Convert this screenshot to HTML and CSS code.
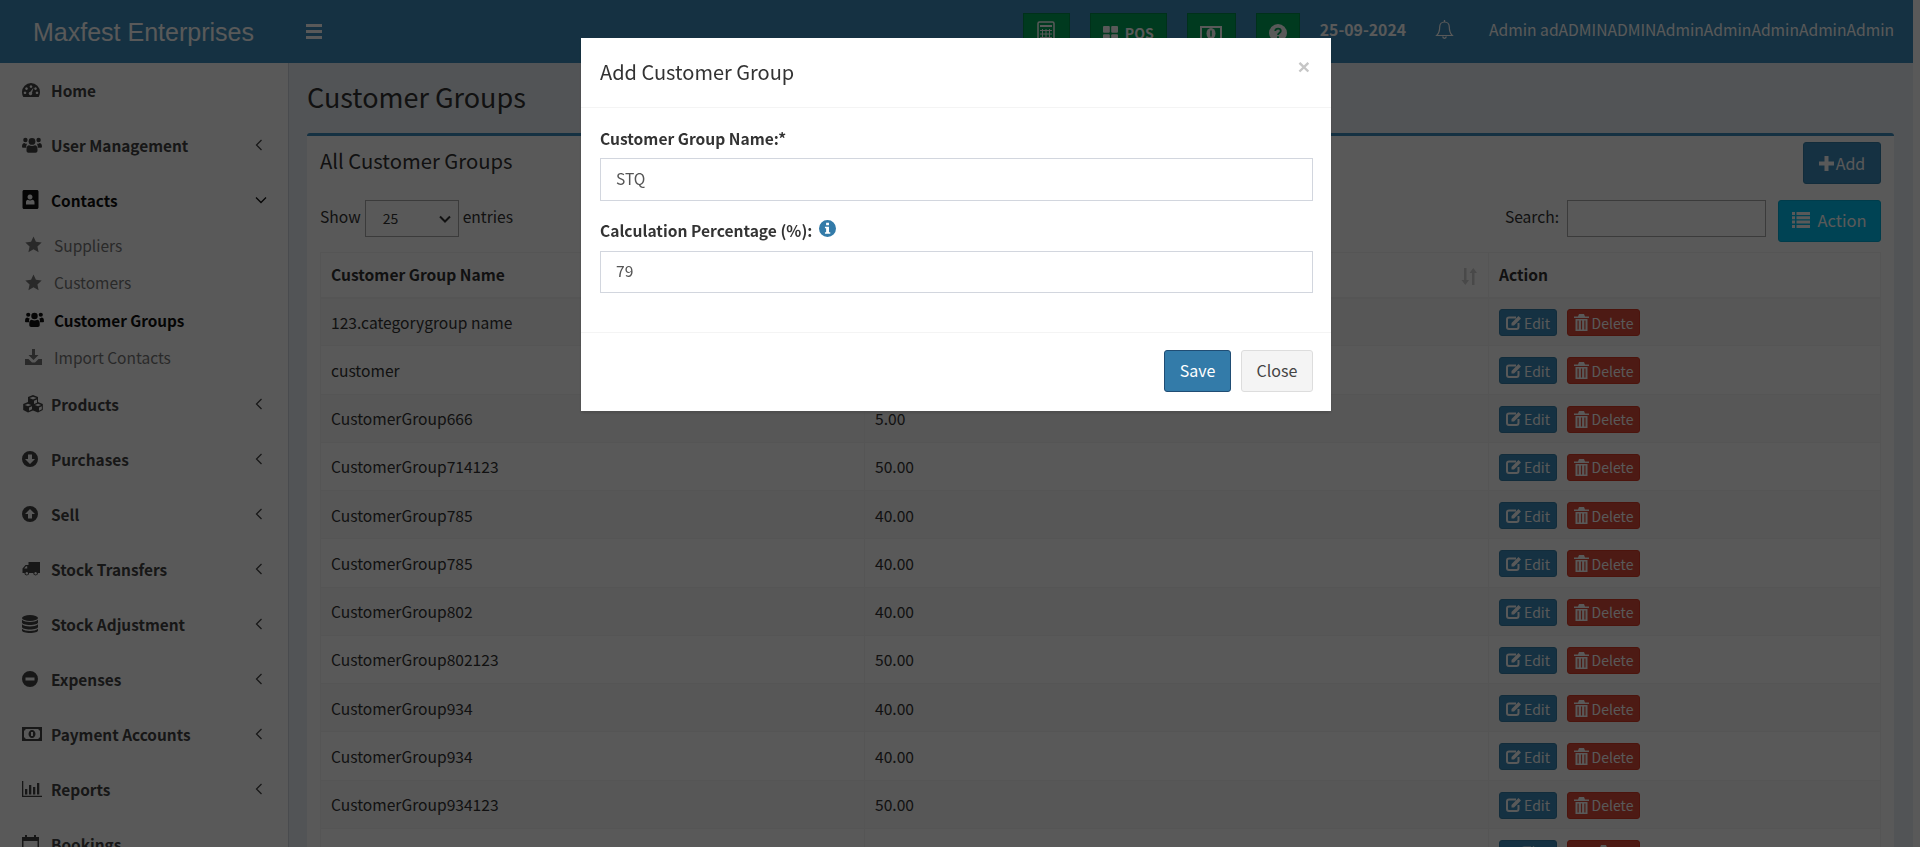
FILE: index.html
```html
<!DOCTYPE html>
<html lang="en">
<head>
    <meta charset="UTF-8">
    <title>Customer Groups</title>
    <link rel="stylesheet" href="styles.css">
</head>
<body>
    <svg class="sprite" width="0" height="0">
        <symbol id="i-users" viewBox="0 0 20 16"><circle cx="3.4" cy="3" r="2.2"/><circle cx="16.6" cy="3" r="2.2"/><circle cx="10" cy="4.4" r="3.4"/><path d="M0 10c0-3 1-4 2.5-4 .8.7 1.6 1 2.6.8-.5.8-.8 1.700-.8 3.200v.8H1c-.6 0-1-.3-1-.8zM20 10c0-3-1-4-2.500-4-.8.7-1.600 1-2.600.8.5.8.8 1.700.8 3.200v.8H19c.6 0 1-.3 1-.8zM7 8.200c1.700 1 4.300 1 6 0 1.300 0 2.500 1.300 2.500 4v1.600c0 1.200-.8 2-2 2H6.500c-1.200 0-2-.8-2-2v-1.600c0-2.700 1.200-4 2.500-4z"/></symbol>
        <symbol id="i-star" viewBox="0 0 16 16"><path d="M8 .5l2.300 5 5.400.6-4 3.700 1.100 5.400L8 12.500l-4.800 2.700 1.100-5.400-4-3.700 5.400-.6z"/></symbol>
        <symbol id="i-left" viewBox="0 0 8 12"><path d="M6.500 1L1.500 6l5 5" fill="none" stroke="currentColor" stroke-width="1.300"/></symbol>
    </svg>

    <header class="topbar">
        <div class="brand">Maxfest Enterprises</div>
        <div class="burger"><span></span><span></span><span></span></div>
        <div class="topbar-right">
            <a class="tool tool-calc">
                <svg width="18" height="24" viewBox="0 0 18 24"><rect x="1" y="1" width="16" height="22" rx="1.500" fill="none" stroke="currentColor" stroke-width="1.500"/><path d="M3 5h12" stroke="currentColor" stroke-width="2"/><path d="M3 9.500h12M3 13h12M3 16.500h12M3 20h12M5.500 8v13M9 8v13M12.500 8v13" stroke="currentColor"/></svg>
            </a>
            <a class="tool tool-pos">
                <svg width="15" height="15" viewBox="0 0 15 15" fill="currentColor"><rect width="6.800" height="6.800" rx="1"/><rect x="8.200" width="6.800" height="6.800" rx="1"/><rect y="8.200" width="6.800" height="6.800" rx="1"/><rect x="8.200" y="8.200" width="6.800" height="6.800" rx="1"/></svg>
                <b>POS</b>
            </a>
            <a class="tool tool-cash">
                <svg width="22" height="15" viewBox="0 0 22 15"><rect x="1" y="1" width="20" height="13" fill="none" stroke="currentColor" stroke-width="2"/><ellipse cx="11" cy="7.500" rx="4.500" ry="5.500" fill="currentColor"/><path d="M11 4.500v6" stroke="#00a65a" stroke-width="1.500"/></svg>
            </a>
            <a class="tool tool-help">
                <svg width="18" height="18" viewBox="0 0 18 18"><circle cx="9" cy="9" r="9" fill="currentColor"/><path d="M6.200 7c.2-1.500 1.300-2.300 2.800-2.300S11.800 5.600 11.800 7c0 2-2.800 2-2.800 4" fill="none" stroke="#00a65a" stroke-width="1.800"/><rect x="8" y="12.300" width="2" height="2" fill="#00a65a"/></svg>
            </a>
            <span class="today">25-09-2024</span>
            <svg class="bell" width="19" height="20" viewBox="0 0 19 20"><path d="M9.500 2c-3 0-4.800 2.300-4.800 5 0 4.500-1 6.500-3 8.500h15.600c-2-2-3-4-3-8.500 0-2.700-1.800-5-4.800-5z" fill="none" stroke="currentColor" stroke-width="1.200"/><path d="M9.500 0v2M7.800 16.500c0 2.400 3.400 2.400 3.400 0" fill="none" stroke="currentColor" stroke-width="1.300"/></svg>
            <span class="username">Admin adADMINADMINAdminAdminAdminAdminAdmin</span>
        </div>
    </header>

    <div class="layout">
        <aside class="sidebar">
            <a class="nav-item">
                <svg class="nav-icon" width="18" height="14" viewBox="0 0 18 14"><path fill-rule="evenodd" d="M9 0a9 9 0 0 1 9 9c0 1.800-.5 3.400-1.300 5H1.300A10 10 0 0 1 0 9a9 9 0 0 1 9-9zM4.500 4.300a1.300 1.300 0 1 0 .01 0zM9 2.300a1.300 1.300 0 1 0 .01 0zM13.500 4.300a1.300 1.300 0 1 0 .01 0zM3 8.500a1.300 1.300 0 1 0 .01 0zM15 8.500a1.300 1.300 0 1 0 .01 0zM11.600 4.500L8.400 8.800a1.700 1.700 0 1 0 1.600 1z"/></svg>
                <span>Home</span>
            </a>
            <a class="nav-item">
                <svg class="nav-icon" width="20" height="18"><use href="#i-users"/></svg>
                <span>User Management</span>
                <svg class="chevron" width="8" height="12"><use href="#i-left"/></svg>
            </a>
            <a class="nav-item active">
                <svg class="nav-icon" width="17" height="19" viewBox="0 0 17 19"><path fill-rule="evenodd" d="M2 0h13c.8 0 1.500.7 1.500 1.500v16c0 .8-.7 1.500-1.500 1.500H2c-.8 0-1.500-.7-1.500-1.500v-16C.5.700 1.200 0 2 0zM8 4.500a2.500 2.500 0 1 0 .01 0zM4 14.500h8.500v-2c0-1.800-1-2.700-2.300-2.700-1.200.8-3.200.8-4.300 0C4.800 9.800 4 10.700 4 12.500z"/></svg>
                <span>Contacts</span>
                <svg class="chevron chevron-down" width="12" height="8" viewBox="0 0 12 8"><path d="M1 1.500l5 5 5-5" fill="none" stroke="currentColor" stroke-width="1.300"/></svg>
            </a>
            <div class="subnav">
                <a class="sub-item"><svg width="17" height="17"><use href="#i-star"/></svg><span>Suppliers</span></a>
                <a class="sub-item"><svg width="17" height="17"><use href="#i-star"/></svg><span>Customers</span></a>
                <a class="sub-item current"><svg width="19" height="17"><use href="#i-users"/></svg><span>Customer Groups</span></a>
                <a class="sub-item"><svg width="17" height="16" viewBox="0 0 17 16"><path d="M7 0h3v6h3.500L8.500 11 3.500 6H7zM0 10h3.500L7 13.500h3L13.500 10H17v6H0z"/></svg><span>Import Contacts</span></a>
            </div>
            <a class="nav-item">
                <svg class="nav-icon" width="22" height="18" viewBox="0 0 22 18"><path fill-rule="evenodd" d="M11 0l5 2v5l4.800 2v6L16 17.500 11 15.500 6 17.500 1.200 15V9L6 7V2zM7.500 3l3.500 1.400L14.500 3 11 1.700zM12 5.800V9l3-1.200V4.600zM2.800 10l3.200 1.300L9.200 10 6 8.700zM12.800 10l3.200 1.300 3.200-1.300L16 8.700zM7 12.500v3.200l3-1.400v-3zM17 12.500v3.200l2.800-1.400v-3z"/></svg>
                <span>Products</span>
                <svg class="chevron" width="8" height="12"><use href="#i-left"/></svg>
            </a>
            <a class="nav-item">
                <svg class="nav-icon" width="16" height="16" viewBox="0 0 16 16"><path fill-rule="evenodd" d="M8 0a8 8 0 1 1 0 16A8 8 0 0 1 8 0zM6 3.500V8H3l5 5 5-5h-3V3.500z"/></svg>
                <span>Purchases</span>
                <svg class="chevron" width="8" height="12"><use href="#i-left"/></svg>
            </a>
            <a class="nav-item">
                <svg class="nav-icon" width="16" height="16" viewBox="0 0 16 16"><path fill-rule="evenodd" d="M8 0a8 8 0 1 1 0 16A8 8 0 0 1 8 0zM6 12.500V8H3l5-5 5 5h-3v4.500z"/></svg>
                <span>Sell</span>
                <svg class="chevron" width="8" height="12"><use href="#i-left"/></svg>
            </a>
            <a class="nav-item">
                <svg class="nav-icon" width="18" height="14" viewBox="0 0 18 14"><path fill-rule="evenodd" d="M6.500 0H18v11h-2a2.400 2.400 0 0 1-4.800 0H7.200a2.400 2.400 0 0 1-4.800 0H.5V6.500L3.500 3h3zM2.200 6.500h3V4.200H4zM4.800 10a1.300 1.300 0 1 0 .01 0zM13.600 10a1.300 1.300 0 1 0 .01 0z"/></svg>
                <span>Stock Transfers</span>
                <svg class="chevron" width="8" height="12"><use href="#i-left"/></svg>
            </a>
            <a class="nav-item">
                <svg class="nav-icon" width="16" height="18" viewBox="0 0 16 18"><ellipse cx="8" cy="3" rx="8" ry="3"/><path d="M0 4.800C1.500 6.500 5 7 8 7s6.500-.5 8-2.200v2.700C16 9 12.500 10 8 10S0 9 0 7.500zM0 9.300C1.500 11 5 11.500 8 11.500s6.500-.5 8-2.200V12c0 1.500-3.500 2.500-8 2.500S0 13.500 0 12zM0 13.800c1.500 1.700 5 2.200 8 2.200s6.500-.5 8-2.200v1.700c0 1.500-3.500 2.500-8 2.500s-8-1-8-2.500z"/></svg>
                <span>Stock Adjustment</span>
                <svg class="chevron" width="8" height="12"><use href="#i-left"/></svg>
            </a>
            <a class="nav-item">
                <svg class="nav-icon" width="16" height="16" viewBox="0 0 16 16"><path fill-rule="evenodd" d="M8 0a8 8 0 1 1 0 16A8 8 0 0 1 8 0zM3.500 6.500v3h9v-3z"/></svg>
                <span>Expenses</span>
                <svg class="chevron" width="8" height="12"><use href="#i-left"/></svg>
            </a>
            <a class="nav-item">
                <svg class="nav-icon" width="20" height="14" viewBox="0 0 20 14"><path fill-rule="evenodd" d="M0 0h20v14H0zM2 3.500v7c1 0 1.500.5 1.500 1.500h13c0-1 .5-1.500 1.500-1.500v-7c-1 0-1.500-.5-1.500-1.500h-13C3.500 3 3 3.500 2 3.500zM10 3c2 0 3.500 1.800 3.500 4S12 11 10 11 6.500 9.200 6.500 7 8 3 10 3zM9 5v4h2V5z"/></svg>
                <span>Payment Accounts</span>
                <svg class="chevron" width="8" height="12"><use href="#i-left"/></svg>
            </a>
            <a class="nav-item">
                <svg class="nav-icon" width="20" height="16" viewBox="0 0 20 16"><path d="M0 0h1.300v14.700H20V16H0zM3 8h2.300v5.500H3zM7 4h2.300v9.500H7zM11 6h2.300v7.500H11zM15 2h2.300v11.500H15z"/></svg>
                <span>Reports</span>
                <svg class="chevron" width="8" height="12"><use href="#i-left"/></svg>
            </a>
            <a class="nav-item">
                <svg class="nav-icon" width="17" height="18" viewBox="0 0 17 18"><path fill-rule="evenodd" d="M3 0h2v2h7V0h2v2h3v16H0V2h3zM1.500 6v10.500h14V6z"/></svg>
                <span>Bookings</span>
            </a>
        </aside>

        <main class="content">
            <h1 class="page-title">Customer Groups</h1>
            <section class="box">
                <div class="box-header">
                    <h2>All Customer Groups</h2>
                    <button class="btn btn-add">
                        <svg width="15" height="15" viewBox="0 0 15 15" fill="currentColor"><path d="M5.500 0h4v5.500H15v4H9.500V15h-4V9.500H0v-4h5.500z"/></svg>Add
                    </button>
                </div>
                <div class="table-tools">
                    <label class="length">Show <span class="fake-select">25<svg width="12" height="8" viewBox="0 0 12 8"><path d="M1 1.500l5 5 5-5" fill="none" stroke="currentColor" stroke-width="2"/></svg></span> entries</label>
                    <label class="search">Search: <span class="fake-input"></span></label>
                    <button class="btn btn-action">
                        <svg width="18" height="16" viewBox="0 0 18 16" fill="currentColor"><path d="M0 0h3v3H0zM4.500 0H18v3H4.500zM0 4.300h3v3H0zM4.500 4.300H18v3H4.500zM0 8.600h3v3H0zM4.500 8.600H18v3H4.500zM0 12.900h3v3H0zM4.500 12.900H18v3H4.500z"/></svg>Action
                    </button>
                </div>
                <table class="data-table" id="groups">
                    <thead>
                        <tr>
                            <th class="col-name">Customer Group Name</th>
                            <th class="col-pct">Calculation Percentage (%)<svg class="sort" width="17" height="18" viewBox="0 0 17 18"><path d="M3 1h2.500v12H8l-3.700 5L.5 13H3zM11 18V6H8.500L12.300 1 16 6h-2.500v12z"/></svg></th>
                            <th class="col-action">Action</th>
                        </tr>
                    </thead>
                    <tbody id="rows"></tbody>
                </table>
            </section>
        </main>
    </div>

    <div class="backdrop"></div>
    <div class="modal">
        <div class="modal-content">
            <div class="modal-header">
                <h4>Add Customer Group</h4>
                <span class="modal-close">×</span>
            </div>
            <div class="modal-body">
                <div class="form-group">
                    <label>Customer Group Name:*</label>
                    <input class="form-control" type="text" value="STQ">
                </div>
                <div class="form-group">
                    <label>Calculation Percentage (%):
                        <svg class="info" width="17" height="17" viewBox="0 0 16 16"><path fill-rule="evenodd" d="M8 0a8 8 0 1 1 0 16A8 8 0 0 1 8 0zM6.700 2.600v2.300h2.700V2.600zM5.600 6.300v1.500h1.100v3.700H5.600V13h5v-1.500H9.400V6.300z"/></svg>
                    </label>
                    <input class="form-control" type="text" value="79">
                </div>
            </div>
            <div class="modal-footer">
                <button class="btn btn-save">Save</button>
                <button class="btn btn-close">Close</button>
            </div>
        </div>
    </div>

    <script>
        var groups = [
            ['123.categorygroup name', ''],
            ['customer', ''],
            ['CustomerGroup666', '5.00'],
            ['CustomerGroup714123', '50.00'],
            ['CustomerGroup785', '40.00'],
            ['CustomerGroup785', '40.00'],
            ['CustomerGroup802', '40.00'],
            ['CustomerGroup802123', '50.00'],
            ['CustomerGroup934', '40.00'],
            ['CustomerGroup934', '40.00'],
            ['CustomerGroup934123', '50.00']
        ];
        var editIcon = '<svg width="15" height="14" viewBox="0 0 15 14"><path d="M10 1.500H3C1.700 1.500 1 2.300 1 3.500v7.500c0 1.200.7 2 2 2h7.500c1.200 0 2-.8 2-2V7" fill="none" stroke="currentColor" stroke-width="2"/><path fill="currentColor" d="M12.500 0L15 2.500 8 9.500H5.500V7z"/></svg>';
        var trashIcon = '<svg width="15" height="17" viewBox="0 0 15 17"><path fill="currentColor" fill-rule="evenodd" d="M5 0h5l1 2.500h4V4H0V2.500h4zM1.500 5h12v12h-12zM3.500 6.500v9h1.200v-9zM6.900 6.500v9h1.200v-9zM10.300 6.500v9h1.200v-9z"/></svg>';
        var html = '';
        groups.forEach(function (g) {
            html += '<tr><td>' + g[0] + '</td><td>' + g[1] + '</td><td>' +
                '<button class="btn btn-xs btn-edit">' + editIcon + 'Edit</button>' +
                '<button class="btn btn-xs btn-delete">' + trashIcon + 'Delete</button>' +
                '</td></tr>';
        });
        // last row only shows the top of its buttons above the fold
        html += '<tr><td></td><td></td><td>' +
            '<button class="btn btn-xs btn-edit">' + editIcon + '</button>' +
            '<button class="btn btn-xs btn-delete">' + trashIcon + '</button>' +
            '</td></tr>';
        document.getElementById('rows').innerHTML = html;
    </script>
</body>
</html>
```

FILE: styles.css
```css
* {
    margin: 0;
    padding: 0;
    box-sizing: border-box;
}

html, body {
    height: 847px;
    overflow: hidden;
}

body {
    font-family: "Noto Sans CJK SC", "Noto Sans", sans-serif;
    font-size: 15.6px;
    line-height: 22px;
    color: #333;
    background: #fff;
    padding-right: 7px;
}

.sprite {
    position: absolute;
}

svg {
    fill: currentColor;
    flex: none;
}

.btn {
    font-family: inherit;
    border: 1px solid transparent;
    border-radius: 3px;
    cursor: pointer;
}

/* top bar */
.topbar {
    height: 63px;
    background: #3c8dbc;
    color: #fff;
    display: flex;
    align-items: center;
}

.brand {
    width: 288px;
    padding-left: 33px;
    font-family: "Liberation Sans", Arial, sans-serif;
    font-size: 25px;
}

.burger {
    margin-left: 18px;
    width: 16px;
    display: flex;
    flex-direction: column;
    gap: 3px;
}

.burger span {
    height: 3px;
    background: #fff;
}

.topbar-right {
    margin-left: auto;
    padding-right: 19px;
    display: flex;
    align-items: center;
}

.tool {
    height: 40px;
    margin-top: 3px;
    margin-right: 20px;
    background: #00a65a;
    border: 1px solid #008d4c;
    display: flex;
    align-items: center;
    justify-content: center;
    gap: 7px;
    font-size: 14px;
}

.tool-calc { width: 47px; }
.tool-pos { width: 77px; }
.tool-cash { width: 49px; }
.tool-help { width: 44px; }

.today {
    font-weight: 700;
    font-size: 15.8px;
    margin-bottom: 3px;
}

.bell {
    margin: 0 35px 3px 29px;
}

.username {
    font-size: 15.65px;
    margin-bottom: 3px;
}

/* sidebar */
.layout {
    display: flex;
    height: 784px;
    background: #ecf0f5;
}

.sidebar {
    width: 289px;
    flex: none;
    background: #fff;
    border-right: 1px solid #d2d6de;
    overflow: hidden;
    padding-top: 0;
}

.nav-item {
    height: 55px;
    padding-left: 22px;
    padding-right: 25px;
    display: grid;
    grid-template-columns: 29px 1fr auto;
    align-items: center;
    font-size: 15.4px;
    font-weight: 600;
    color: #444;
    position: relative;
    top: -1px;
}

.nav-item.active {
    color: #111;
}

.chevron-down {
    margin-right: -4px;
}

.subnav {
    margin-top: -1px;
    position: relative;
    top: -1px;
}

.sub-item {
    height: 37.500px;
    padding-left: 25px;
    display: grid;
    grid-template-columns: 29px 1fr;
    align-items: center;
    font-size: 15.5px;
    color: #777;
}

.sub-item.current {
    color: #111;
    font-weight: 600;
    font-size: 15.3px;
}

/* content */
.content {
    flex: 1;
    min-width: 0;
    padding: 0 19px 0 18px;
}

.page-title {
    font-size: 27px;
    font-weight: 400;
    line-height: 40px;
    margin-top: 14px;
    margin-bottom: 16px;
}

.box {
    background: #fff;
    border-top: 3px solid #3c8dbc;
    border-radius: 3px;
    padding: 0 13px;
}

.box-header {
    height: 64px;
    display: flex;
    justify-content: space-between;
    padding-top: 6px;
}

.box-header h2 {
    font-size: 20.250px;
    font-weight: 400;
    line-height: 26px;
    margin-top: 6px;
}

.btn-add {
    width: 78px;
    height: 42px;
    background: #3c8dbc;
    border-color: #367fa9;
    color: #fff;
    font-size: 16px;
    display: flex;
    align-items: center;
    justify-content: center;
    gap: 2px;
}

.table-tools {
    display: flex;
    align-items: flex-start;
    height: 52px;
}

.length, .search {
    display: flex;
    align-items: flex-start;
    line-height: 33px;
    gap: 4px;
}

.fake-select {
    width: 94px;
    height: 37px;
    border: 1px solid #aaa;
    padding: 0 7px 0 17px;
    display: flex;
    align-items: center;
    justify-content: space-between;
    font-size: 14px;
}

.search {
    margin-left: auto;
    gap: 8px;
}

.fake-input {
    width: 199px;
    height: 37px;
    border: 1px solid #aaa;
}

.btn-action {
    margin-left: 12px;
    width: 103px;
    height: 42px;
    padding-bottom: 3px;
    background: #00c0ef;
    border-color: #00acd6;
    color: #fff;
    font-size: 16.500px;
    display: flex;
    align-items: center;
    justify-content: center;
    gap: 7px;
}

.data-table {
    width: 100%;
    border-collapse: collapse;
    table-layout: fixed;
}

.data-table th, .data-table td {
    text-align: left;
    padding: 0 10px;
    border: 1px solid #f4f4f4;
}

.data-table th {
    height: 45px;
    padding-bottom: 2px;
    font-weight: 700;
    position: relative;
    border-bottom-width: 2px;
}

.data-table td {
    height: 48.250px;
}

.data-table tbody tr:nth-child(odd) {
    background: #f9f9f9;
}

.col-name { width: 544px; }
.col-pct { width: 624px; }

.sort {
    position: absolute;
    right: 10px;
    top: 14px;
    color: #d0d0d0;
}

.btn-xs {
    height: 27px;
    margin-top: 2px;
    font-size: 14px;
    color: #fff;
    display: inline-flex;
    align-items: center;
    justify-content: center;
    gap: 3px;
    vertical-align: middle;
}

.btn-edit {
    width: 58px;
    background: #3c8dbc;
    border-color: #367fa9;
}

.btn-delete {
    width: 73px;
    margin-left: 10px;
    background: #dd4b39;
    border-color: #d73925;
}

/* modal */
.backdrop {
    position: fixed;
    inset: 0;
    background: rgba(0, 0, 0, 0.65);
}

.modal {
    position: fixed;
    inset: 0;
    padding-top: 38px;
}

.modal-content {
    width: 750px;
    height: 373px;
    margin-left: 581px;
    background: #fff;
    box-shadow: 0 2px 3px rgba(0, 0, 0, 0.125);
}

.modal-header {
    height: 70px;
    padding: 0 20px 2px 19px;
    border-bottom: 1px solid #f4f4f4;
    display: flex;
    align-items: center;
    justify-content: space-between;
}

.modal-header h4 {
    font-size: 20px;
    font-weight: 400;
}

.modal-close {
    font-family: "Liberation Sans", Arial, sans-serif;
    font-size: 21px;
    font-weight: 700;
    color: #c6c6c6;
    margin-top: -10px;
    margin-right: 1px;
}

.modal-body {
    height: 224px;
    padding: 19px 18px 0 19px;
}

.form-group {
    margin-bottom: 18px;
}

.form-group label {
    display: flex;
    align-items: center;
    gap: 7px;
    height: 22px;
    margin-bottom: 9px;
    font-weight: 700;
}

.form-group + .form-group label {
    margin-bottom: 10px;
}

.info {
    color: #337ba9;
    margin-top: -3px;
}

.form-control {
    display: block;
    width: 100%;
    height: 43px;
    padding: 0 15px 4px;
    border: 1px solid #d2d6de;
    font-family: inherit;
    font-size: 15.6px;
    color: #555;
    outline: none;
}

.form-group + .form-group .form-control {
    height: 42px;
}

.modal-footer {
    height: 79px;
    border-top: 1px solid #f4f4f4;
    padding: 17px 18px 0 0;
    display: flex;
    justify-content: flex-end;
    gap: 10px;
}

.btn-save, .btn-close {
    height: 42px;
    padding-bottom: 3px;
    font-size: 16px;
}

.btn-save {
    width: 67px;
    background: #337ba9;
    border-color: #204d74;
    color: #fff;
}

.btn-close {
    width: 72px;
    background: #f4f4f4;
    border-color: #ddd;
    color: #444;
}
```
